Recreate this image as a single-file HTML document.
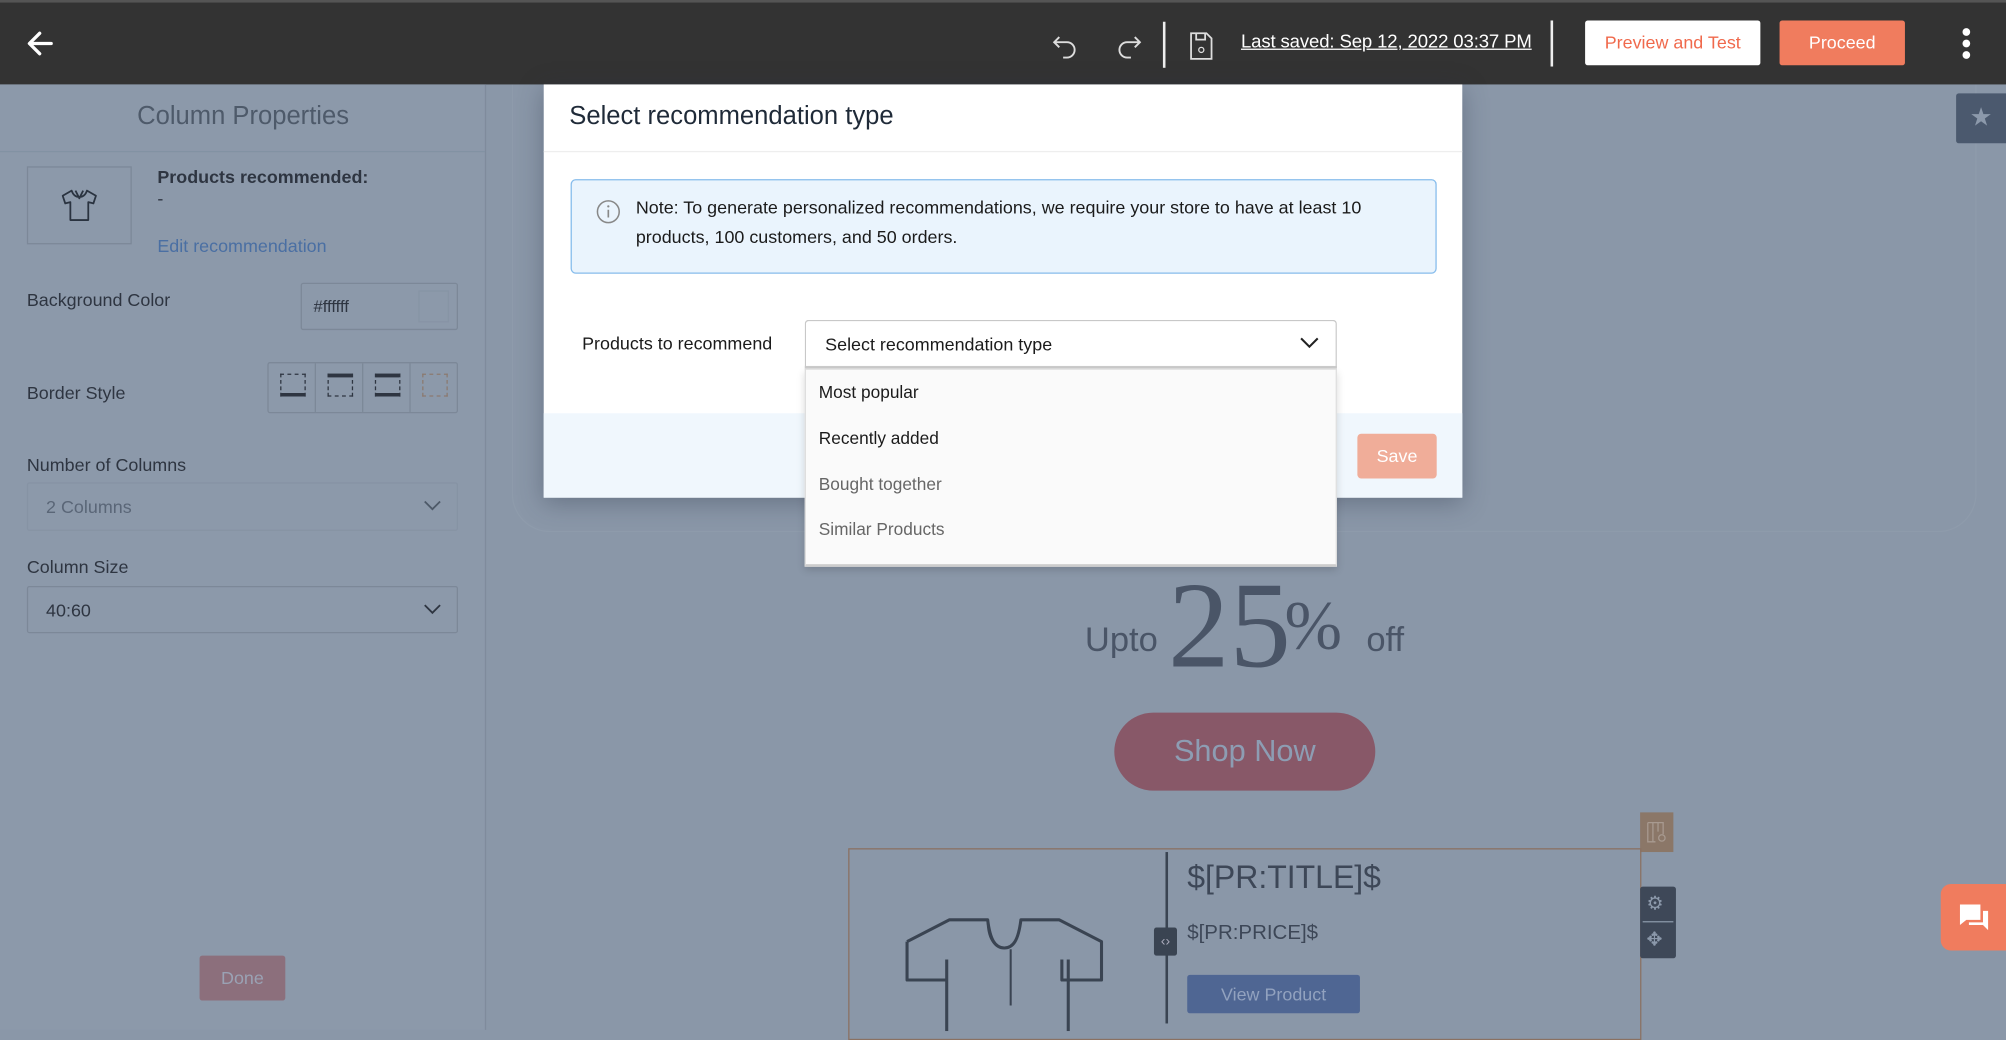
<!DOCTYPE html>
<html><head><meta charset="utf-8"><style>
*{box-sizing:border-box;margin:0;padding:0}
html,body{width:2006px;height:1030px;overflow:hidden;background:#8a97a8;font-family:"Liberation Sans",sans-serif}
#w{position:absolute;left:0;top:0;width:1568px;height:805px;transform:scale(1.27934);transform-origin:0 0;background:#8a97a8}
.a{position:absolute}
.t{position:absolute;white-space:nowrap}
</style></head><body><div id="w">
<!-- top bar -->
<div class="a" style="left:0;top:0;width:1568px;height:66px;background:#333;border-top:2px solid #555"></div>
<svg class="a" style="left:20px;top:23px" width="24" height="22" viewBox="0 0 24 22"><path d="M20 11H4M11 3L3 11l8 8" stroke="#fff" stroke-width="2.6" fill="none" stroke-linecap="round" stroke-linejoin="round"/></svg>
<svg class="a" style="left:821px;top:24px" width="24" height="24" viewBox="0 0 24 24"><path d="M7 5L3 9l4 4M3 9h10a6 6 0 0 1 0 12h-3" stroke="#ddd" stroke-width="1.5" fill="none"/></svg>
<svg class="a" style="left:870px;top:24px" width="24" height="24" viewBox="0 0 24 24"><path d="M17 5l4 4-4 4M21 9H11a6 6 0 0 0 0 12h3" stroke="#ddd" stroke-width="1.5" fill="none"/></svg>
<div class="a" style="left:909px;top:17px;width:2px;height:36px;background:#eee"></div>
<svg class="a" style="left:929px;top:24px" width="20" height="24" viewBox="0 0 20 24"><path d="M2 2h12l4 4v16H2z M6 2v5h7V2" stroke="#ddd" stroke-width="1.4" fill="none"/><circle cx="10" cy="15" r="2" stroke="#ddd" fill="none"/></svg>
<div class="t" style="left:970px;top:25px;font-size:14.5px;color:#fff;text-decoration:underline;letter-spacing:-0.1px">Last saved: Sep 12, 2022 03:37 PM</div>
<div class="a" style="left:1212px;top:16px;width:2px;height:36px;background:#eee"></div>
<div class="a" style="left:1239px;top:16px;width:137px;height:35px;background:#fff;border-radius:2px;color:#f0694c;font-size:14px;text-align:center;line-height:35px">Preview and Test</div>
<div class="a" style="left:1391px;top:16px;width:98px;height:35px;background:#f07c5e;border-radius:2px;color:#fff;font-size:14px;text-align:center;line-height:35px">Proceed</div>
<div class="a" style="left:1534px;top:22px;width:6px;height:6px;border-radius:3px;background:#fff"></div>
<div class="a" style="left:1534px;top:31px;width:6px;height:6px;border-radius:3px;background:#fff"></div>
<div class="a" style="left:1534px;top:40px;width:6px;height:6px;border-radius:3px;background:#fff"></div>

<!-- left panel -->
<div class="a" style="left:0;top:66px;width:380px;height:739px;background:#8c99aa;border-right:1px solid #7f8b9c"></div>
<div class="t" style="left:0;width:380px;text-align:center;top:80px;font-size:20px;color:#4e5a6a">Column Properties</div>
<div class="a" style="left:0;top:118px;width:379px;height:1px;background:#8292a3"></div>
<div class="a" style="left:21px;top:130px;width:82px;height:61px;border:1px solid #7c8898"></div>
<svg class="a" style="left:47px;top:146px" width="30" height="28" viewBox="0 0 30 28"><path d="M9 3l-7 4 2 6 4-1v14h14V12l4 1 2-6-7-4c-1 3-3 5-6 5s-5-2-6-5zM12 3l3 6 3-6" stroke="#2a3340" stroke-width="1.4" fill="none" stroke-linejoin="round"/></svg>
<div class="t" style="left:123px;top:130px;font-size:14px;font-weight:bold;color:#2e3541">Products recommended:</div>
<div class="t" style="left:123px;top:147px;font-size:14px;color:#2e3541">-</div>
<div class="t" style="left:123px;top:184px;font-size:14px;color:#4a6fa3">Edit recommendation</div>
<div class="t" style="left:21px;top:226px;font-size:14px;color:#2e3541">Background Color</div>
<div class="a" style="left:235px;top:221px;width:123px;height:37px;border:1px solid #7c8898;border-radius:2px"></div>
<div class="t" style="left:245px;top:232px;font-size:13px;color:#2e3541">#ffffff</div>
<div class="a" style="left:327px;top:227px;width:24px;height:25px;border:1px solid #8794a5"></div>
<div class="t" style="left:21px;top:299px;font-size:14px;color:#2e3541">Border Style</div>
<div class="a" style="left:209px;top:283px;width:149px;height:40px;border:1px solid #7c8898;border-radius:2px"></div>
<div class="a" style="left:246px;top:284px;width:1px;height:38px;background:#7c8898"></div>
<div class="a" style="left:283px;top:284px;width:1px;height:38px;background:#7c8898"></div>
<div class="a" style="left:320px;top:284px;width:1px;height:38px;background:#7c8898"></div>
<div class="a" style="left:219px;top:292px;width:20px;height:18px;border:1px dashed #2e3541;border-bottom:3px solid #2e3541"></div>
<div class="a" style="left:256px;top:292px;width:20px;height:18px;border:1px dashed #2e3541;border-top:3px solid #2e3541"></div>
<div class="a" style="left:293px;top:292px;width:20px;height:18px;border:1px dashed #2e3541;border-top:3px solid #2e3541;border-bottom:3px solid #2e3541"></div>
<div class="a" style="left:330px;top:292px;width:20px;height:18px;border:1px dashed #8b7a70"></div>
<div class="t" style="left:21px;top:355px;font-size:14px;color:#2e3541">Number of Columns</div>
<div class="a" style="left:21px;top:377px;width:337px;height:38px;border:1px solid #8693a4;border-radius:2px"></div>
<div class="t" style="left:36px;top:388px;font-size:14px;color:#5a6677">2 Columns</div>
<svg class="a" style="left:331px;top:390px" width="14" height="10"><path d="M1 2l6 6 6-6" stroke="#4d5968" stroke-width="1.4" fill="none"/></svg>
<div class="t" style="left:21px;top:435px;font-size:14px;color:#2e3541">Column Size</div>
<div class="a" style="left:21px;top:458px;width:337px;height:37px;border:1px solid #7c8898;border-radius:2px"></div>
<div class="t" style="left:36px;top:469px;font-size:14px;color:#2e3541">40:60</div>
<svg class="a" style="left:331px;top:471px" width="14" height="10"><path d="M1 2l6 6 6-6" stroke="#2e3541" stroke-width="1.4" fill="none"/></svg>
<div class="a" style="left:156px;top:747px;width:67px;height:35px;background:#8c6f7c;border-radius:2px;color:#9aa2b4;font-size:14px;text-align:center;line-height:35px">Done</div>

<!-- canvas -->
<div class="a" style="left:400px;top:66px;width:1145px;height:350px;border:1px solid #8e9bab;border-top:none;border-radius:0 0 30px 30px"></div>
<div class="t" style="left:848px;top:485px;font-size:27px;color:#4a5567">Upto</div>
<div class="t" style="left:913px;top:441px;font-size:96px;font-family:'Liberation Serif',serif;color:#4a5567;line-height:1">25</div>
<div class="t" style="left:1004px;top:462px;font-size:54px;font-family:'Liberation Serif',serif;color:#4a5567;line-height:1">%</div>
<div class="t" style="left:1068px;top:485px;font-size:27px;color:#4a5567">off</div>
<div class="a" style="left:871px;top:557px;width:204px;height:61px;border-radius:31px;background:#885868;color:#8d9db3;font-size:24px;text-align:center;line-height:61px">Shop Now</div>
<div class="a" style="left:1282px;top:635px;width:26px;height:31px;background:#8b7768"></div>
<svg class="a" style="left:1287px;top:642px" width="16" height="18"><path d="M1 1h12v9M1 1v15h6M5 1v15M9 1v7" stroke="#a89a90" stroke-width="1" fill="none"/><circle cx="12" cy="13" r="2.5" stroke="#a89a90" fill="none"/></svg>
<div class="a" style="left:663px;top:663px;width:620px;height:150px;border:1.5px solid #8a7162"></div>
<div class="a" style="left:911px;top:666px;width:2px;height:134px;background:#3a4452"></div>
<div class="a" style="left:902px;top:725px;width:18px;height:22px;background:#3a4452;border-radius:2px;color:#aab;font-size:11px;text-align:center;line-height:22px">‹›</div>
<svg class="a" style="left:706px;top:716px" width="165" height="90" viewBox="0 0 165 90"><path d="M34 34v56M129 34v56 M3 20l33-17h30c2 16 6 22 13 22s11-6 13-22h30l33 17v30h-31V34M3 20v30h31V34" stroke="#3a4452" stroke-width="2.4" fill="none" stroke-linejoin="round"/><path d="M66 3c0 14 5 22 13 22M84 26v44" stroke="#3a4452" stroke-width="1.6" fill="none"/></svg>
<div class="t" style="left:928px;top:672px;font-size:25px;color:#3d4757">$[PR:TITLE]$</div>
<div class="t" style="left:928px;top:721px;font-size:16px;color:#3d4757">$[PR:PRICE]$</div>
<div class="a" style="left:928px;top:762px;width:135px;height:30px;background:#4f6693;border-radius:2px;color:#92a2bf;font-size:14px;text-align:center;line-height:30px">View Product</div>
<div class="a" style="left:1282px;top:693px;width:28px;height:56px;background:#3e4858;border-radius:2px"></div>
<div class="a" style="left:1284px;top:720px;width:24px;height:1px;background:#8a97a8"></div>
<div class="t" style="left:1287px;top:697px;font-size:15px;color:#8c99ab">⚙</div>
<div class="t" style="left:1287px;top:725px;font-size:15px;color:#8c99ab">✥</div>
<div class="a" style="left:1529px;top:73px;width:39px;height:39px;background:#4b596e;border-radius:2px 0 0 2px;color:#8c99ab;font-size:20px;text-align:center;line-height:39px">★</div>
<div class="a" style="left:1517px;top:691px;width:51px;height:52px;background:#f07c5e;border-radius:8px 0 0 8px"></div>
<svg class="a" style="left:1530px;top:705px" width="26" height="24" viewBox="0 0 26 24"><path d="M2 2h16v12H7l-5 4z" fill="#fff"/><path d="M20 7h4v15l-4-4H9v-2h11z" fill="#fff"/></svg>

<!-- modal -->
<div class="a" style="left:425px;top:66px;width:718px;height:323px;background:#fff;box-shadow:0 4px 18px rgba(40,50,70,.35)"></div>
<div class="t" style="left:445px;top:80px;font-size:20px;color:#1f2a38">Select recommendation type</div>
<div class="a" style="left:425px;top:118px;width:718px;height:1px;background:#eee"></div>
<div class="a" style="left:446px;top:140px;width:677px;height:74px;background:#eaf4fd;border:1px solid #86bcec;border-radius:4px"></div>
<svg class="a" style="left:466px;top:156px" width="19" height="19"><circle cx="9.5" cy="9.5" r="8.5" stroke="#888" stroke-width="1.2" fill="none"/><path d="M9.5 8v6" stroke="#888" stroke-width="1.3"/><circle cx="9.5" cy="5.3" r=".9" fill="#888"/></svg>
<div class="a" style="left:497px;top:151px;font-size:14px;line-height:23px;color:#1b1b1b;width:600px">Note: To generate personalized recommendations, we require your store to have at least 10 products, 100 customers, and 50 orders.</div>
<div class="t" style="left:455px;top:260px;font-size:14px;color:#1b1b1b">Products to recommend</div>
<div class="a" style="left:425px;top:323px;width:718px;height:66px;background:#f0f7fd"></div>
<div class="a" style="left:1061px;top:339px;width:62px;height:35px;background:#f0ad99;border-radius:3px;color:#fff;font-size:14px;text-align:center;line-height:35px">Save</div>
<div class="a" style="left:629px;top:250px;width:416px;height:38px;background:#fff;border:1px solid #c8c8c8;border-bottom:2px solid #ccc;border-radius:3px 3px 0 0"></div>
<div class="t" style="left:645px;top:261px;font-size:14px;color:#1b1b1b">Select recommendation type</div>
<svg class="a" style="left:1016px;top:263px" width="15" height="10"><path d="M1 1.5l6.5 6.5 6.5-6.5" stroke="#222" stroke-width="1.6" fill="none"/></svg>
<div class="a" style="left:629px;top:288px;width:416px;height:155px;background:#fafafa;border:1px solid #ddd;border-bottom:2px solid #ccc;box-shadow:0 3px 6px rgba(0,0,0,.15)"></div>
<div class="t" style="left:640px;top:299px;font-size:13.5px;color:#1b1b1b">Most popular</div>
<div class="t" style="left:640px;top:335px;font-size:13.5px;color:#1b1b1b">Recently added</div>
<div class="t" style="left:640px;top:371px;font-size:13.5px;color:#666">Bought together</div>
<div class="t" style="left:640px;top:406px;font-size:13.5px;color:#666">Similar Products</div>
</div></body></html>
